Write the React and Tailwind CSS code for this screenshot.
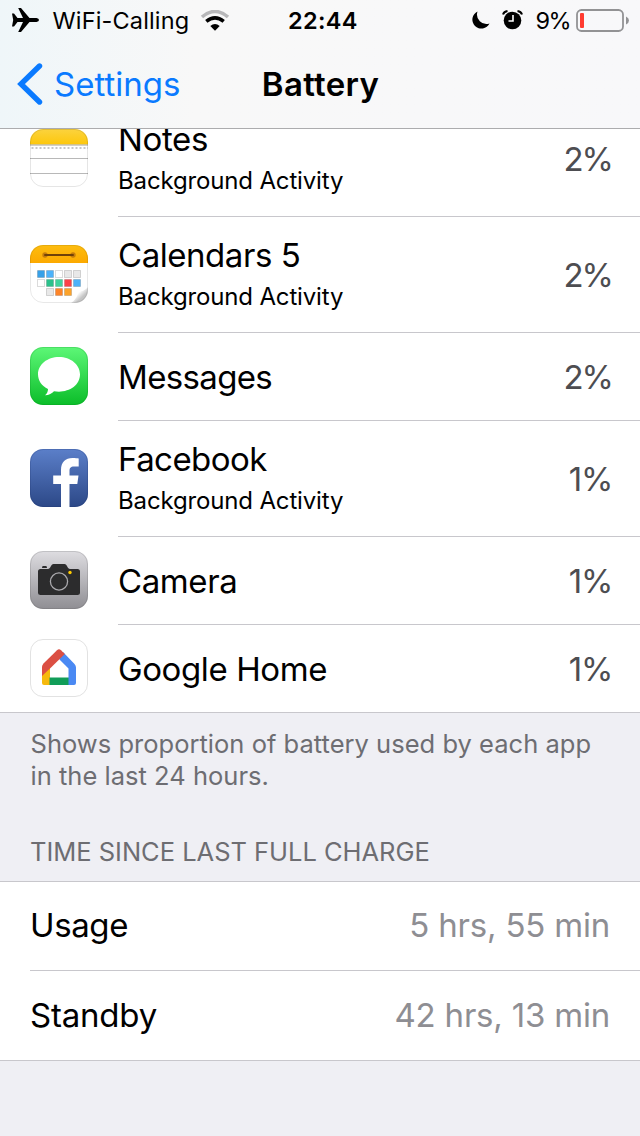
import React from "react";

function NotesIcon() {
  return (
    <svg className="size-[58px]" viewBox="0 0 58 58">
      <defs>
        <clipPath id="notesClip"><rect width="58" height="58" rx="13" /></clipPath>
        <linearGradient id="notesTop" x1="0" y1="0" x2="0" y2="1">
          <stop offset="0" stopColor="#fbd33f" />
          <stop offset="1" stopColor="#fdc70b" />
        </linearGradient>
      </defs>
      <g clipPath="url(#notesClip)">
        <rect width="58" height="58" fill="#fff" />
        <rect width="58" height="15.5" fill="url(#notesTop)" />
        <path d="M0 16H58" stroke="#a6a28f" strokeWidth="1.1" />
        <path d="M1.500 19H58" stroke="#c6c6c6" strokeWidth="2" strokeDasharray="2 2" />
        <path d="M0 29.500H58M0 44.500H58" stroke="#b8b8b8" strokeWidth="1" />
      </g>
      <rect x=".5" y=".5" width="57" height="57" rx="12.500" fill="none" stroke="#000" strokeOpacity=".1" />
    </svg>
  );
}

const calendarCells = [
  [7, 25, "#36a0e8"], [16, 25, "#4cb2fa"], [25, 25, "#ffffff"], [34, 25, "#e8e8e8"], [43, 25, "#e8e8e8"],
  [7, 34, "#ffffff"], [16, 34, "#2bc18b"], [25, 34, "#40d39c"], [34, 34, "#fb4248"], [43, 34, "#4cb2fa"],
  [16, 43, "#e8e8e8"], [25, 43, "#fd8428"], [34, 43, "#fca32a"],
];

function CalendarsIcon() {
  return (
    <svg className="size-[58px]" viewBox="0 0 58 58">
      <defs>
        <clipPath id="calClip"><rect width="58" height="58" rx="13" /></clipPath>
        <linearGradient id="calTop" x1="0" y1="0" x2="0" y2="1">
          <stop offset="0" stopColor="#fdbd10" />
          <stop offset="1" stopColor="#fca900" />
        </linearGradient>
        <linearGradient id="calCurl" x1="0" y1="0" x2="1" y2="1">
          <stop offset="0.1" stopColor="#d0d0d0" />
          <stop offset="0.4" stopColor="#ffffff" />
          <stop offset="0.65" stopColor="#c4c4c4" />
        </linearGradient>
      </defs>
      <g clipPath="url(#calClip)">
        <rect width="58" height="58" fill="#fff" />
        <rect width="58" height="18" fill="url(#calTop)" />
        <circle cx="15" cy="10" r="2.700" fill="#c57c0c" />
        <circle cx="43" cy="10" r="2.700" fill="#c57c0c" />
        <path d="M15 10H43" stroke="#704209" strokeWidth="2" strokeLinecap="round" />
        {calendarCells.map(([x, y, fill]) => (
          <rect key={`${x}-${y}`} x={x + 0.5} y={y + 0.5} width="7" height="7" fill={fill} stroke="#000" strokeOpacity=".14" strokeWidth="1" />
        ))}
        <path d="M58 42C55 46 51 46 49 47C47 49 48 53 41 58H58Z" fill="url(#calCurl)" />
      </g>
      <rect x=".5" y=".5" width="57" height="57" rx="12.500" fill="none" stroke="#000" strokeOpacity=".09" />
    </svg>
  );
}

function MessagesIcon() {
  return (
    <svg className="size-[58px]" viewBox="0 0 58 58">
      <defs>
        <linearGradient id="msgBg" x1="0" y1="0" x2="0" y2="1">
          <stop offset="0" stopColor="#5df777" />
          <stop offset="1" stopColor="#0bbd29" />
        </linearGradient>
      </defs>
      <rect width="58" height="58" rx="13" fill="url(#msgBg)" />
      <rect x=".5" y=".5" width="57" height="57" rx="12.500" fill="none" stroke="#087b1d" strokeOpacity=".2" />
      <path d="M29 10C17.300 10 8 17.500 8 27.300C8 33.700 11.800 39 18 42C18 44.500 17 46.500 15 48.300C19 48 22 46.500 24 44.200C37 46.500 50 39.500 50 27.300C50 17.500 40.500 10 29 10Z" fill="#fff" />
    </svg>
  );
}

function FacebookIcon() {
  return (
    <svg className="size-[58px]" viewBox="0 0 58 58">
      <defs>
        <linearGradient id="fbBg" x1="0" y1="0" x2="0" y2="1">
          <stop offset="0" stopColor="#5b7fc9" />
          <stop offset="1" stopColor="#2c4887" />
        </linearGradient>
      </defs>
      <rect width="58" height="58" rx="13" fill="url(#fbBg)" />
      <rect x=".5" y=".5" width="57" height="57" rx="12.500" fill="none" stroke="#172c63" strokeOpacity=".2" />
      <path d="M31 58V35H23.200V26.500H31V21C31 13 35.500 9 42.500 9C45.200 9 47.400 9.200 48.700 9.500V17.500H44C40.500 17.500 39.500 19 39.500 22V26.500H48.500L47.300 35H39.500V58Z" fill="#fff" />
    </svg>
  );
}

function CameraIcon() {
  return (
    <svg className="size-[58px]" viewBox="0 0 58 58">
      <defs>
        <linearGradient id="camBg" x1="0" y1="0" x2="0" y2="1">
          <stop offset="0" stopColor="#dedde1" />
          <stop offset="1" stopColor="#8f8e93" />
        </linearGradient>
      </defs>
      <rect width="58" height="58" rx="13" fill="url(#camBg)" />
      <rect x=".5" y=".5" width="57" height="57" rx="12.500" fill="none" stroke="#555" strokeOpacity=".2" />
      <path d="M13 15H16Q17 15 17 17H12Q12 15 13 15Z" fill="#2c2c2d" />
      <path d="M10.500 18H18C20.500 18 21 13 23.500 13H34.500C37 13 37.500 18 40 18H47.500Q50 18 50 20.500V42Q50 44 47.500 44H10.500Q8 44 8 42V20.500Q8 18 10.500 18Z" fill="#2c2c2d" />
      <circle cx="29" cy="30.500" r="8.600" fill="none" stroke="#aaa9ad" strokeWidth="1.300" />
      <circle cx="40" cy="21.500" r="1.700" fill="#ffcc00" />
    </svg>
  );
}

function GoogleHomeIcon() {
  return (
    <svg className="size-[58px]" viewBox="0 0 58 58">
      <rect x=".5" y=".5" width="57" height="57" rx="12.500" fill="#fff" stroke="#e2e2e2" />
      <path d="M12 34L20 28V46H14Q12 46 12 44Z" fill="#f6b90d" />
      <path d="M19.500 38.500H39V46H19.500Z" fill="#119d58" />
      <path d="M29 16L33 13L44.500 25Q46 26.500 46 28.500V44Q46 46 44 46H38.500V29.500L29.500 20.500Z" fill="#4a89f3" />
      <path d="M12 37V28Q12 26 13.500 24.500L27 11.200Q29 9.500 31 11.200L34.800 15L20 29.500Z" fill="#db4f43" />
    </svg>
  );
}

const apps = [
  { name: "Notes", background: true, percent: "2%", Icon: NotesIcon, tracking: "tracking-[-0.35px]" },
  { name: "Calendars 5", background: true, percent: "2%", Icon: CalendarsIcon, tracking: "tracking-[-0.45px]" },
  { name: "Messages", background: false, percent: "2%", Icon: MessagesIcon, tracking: "tracking-[-0.65px]" },
  { name: "Facebook", background: true, percent: "1%", Icon: FacebookIcon, tracking: "tracking-[-0.55px]" },
  { name: "Camera", background: false, percent: "1%", Icon: CameraIcon, tracking: "tracking-[-0.4px]" },
  { name: "Google Home", background: false, percent: "1%", Icon: GoogleHomeIcon, tracking: "tracking-[-0.4px]" },
];

function AppRow({ app, last }) {
  const { Icon } = app;
  const height = app.background ? "h-[116px]" : last ? "h-[87px]" : "h-[88px]";
  const percentTracking = app.percent === "1%" ? "mr-[-0.5px] tracking-[-1px]" : "tracking-[-2px]";
  return (
    <li className={`flex pl-[30px] ${height}`}>
      <div className={app.background ? "pt-[28px]" : "pt-[14px]"}>
        <Icon />
      </div>
      <div className={`ml-[30px] flex flex-1 items-center justify-between pr-[28px] ${last ? "" : "border-b border-[#c8c7cc]"}`}>
        <div className={`flex flex-col gap-[6px] ${app.background ? "pb-[2px]" : ""}`}>
          <span className={`text-[33px] leading-[40px] text-black ${app.tracking}`}>{app.name}</span>
          {app.background && <span className="text-[24px] leading-[32px] tracking-[-0.15px] text-black">Background Activity</span>}
        </div>
        <span className={`text-[33px] leading-[40px] text-[#4d4d51] ${percentTracking}`}>{app.percent}</span>
      </div>
    </li>
  );
}

function StatusBar() {
  return (
    <div className="flex h-[40px] items-center text-black">
      <svg className="ml-[11px] h-[26px] w-[29px]" viewBox="0 0 29 26">
        <path d="M1 6.500H3L6.500 11H12L7.200 1H10L18.500 11H25.500Q28 11.500 28 13Q28 14.500 25.500 15H18.500L10 25H7.200L12 15H6.500L3 19.500H1L2.200 13Z" fill="#000" />
      </svg>
      <span className="ml-[12.500px] w-[137.500px] pt-px text-[23.500px] leading-[40px] tracking-[0.15px] whitespace-nowrap">WiFi-Calling</span>
      <svg className="ml-[10px] h-[21px] w-[30px]" viewBox="0 0 30 21">
        <path d="M2 7Q15 -4 28 7" fill="none" stroke="#b7b7b9" strokeWidth="3.600" />
        <path d="M6.300 11.300Q15 4.300 23.700 11.300" fill="none" stroke="#000" strokeWidth="3.600" />
        <path d="M10.300 16Q15 12 19.700 16L15 20.800Z" fill="#000" />
      </svg>
      <span className="ml-[58px] w-[70px] pt-px text-[23.500px] leading-[40px] font-semibold tracking-[0.3px] whitespace-nowrap">22:44</span>
      <svg className="ml-[113px] h-[18px] w-[19px]" viewBox="0 0 19 18">
        <path d="M6.500 0.500A9 9 0 1 0 18.500 12.500A9.500 9.500 0 0 1 6.500 .5Z" fill="#000" />
      </svg>
      <svg className="ml-[12px] h-[20px] w-[21px]" viewBox="0 0 21 20">
        <circle cx="10.500" cy="10.500" r="8.800" fill="#000" />
        <path d="M1 4.500Q2 1.500 5.500 1M15.500 1Q19 1.500 20 4.500" fill="none" stroke="#000" strokeWidth="2" />
        <path d="M11 5V11H6.500" fill="none" stroke="#fff" strokeWidth="1.600" />
      </svg>
      <span className="ml-[12.500px] w-[35.500px] pt-px text-[23.500px] leading-[40px] tracking-[-1.500px] whitespace-nowrap">9%</span>
      <svg className="ml-[5px] h-[24px] w-[54px]" viewBox="0 0 54 24">
        <rect x="1" y="2" width="46" height="21" rx="4.500" fill="none" stroke="#929294" strokeWidth="1.800" />
        <rect x="4" y="5" width="4" height="15" rx="1" fill="#ff3b30" />
        <path d="M50 8.500Q53 10 53 12.500T50 16.500Z" fill="#929294" />
      </svg>
    </div>
  );
}

export default function App() {
  return (
    <div className="flex h-[1136px] w-[640px] flex-col overflow-hidden bg-[#efeff4] font-['Inter','Liberation_Sans',sans-serif]">
      <header className="relative z-10 h-[129px] shrink-0 border-b border-[#acacae] bg-[#f8f8f9] bg-linear-to-r from-[#eff6f9] via-[#f8f8f8] via-30% to-[#f8f8fa]">
        <StatusBar />
        <nav className="grid h-[88px] grid-cols-[1fr_auto_1fr] items-center">
          <a className="flex items-center pl-[17px] text-[#0a7aff]">
            <svg className="h-[42px] w-[26px]" viewBox="0 0 26 42">
              <path d="M22.500 3L4 21L22.500 39" fill="none" stroke="currentColor" strokeWidth="5.400" strokeLinecap="round" />
            </svg>
            <span className="ml-[11px] text-[33px] leading-[40px] tracking-[0.02px]">Settings</span>
          </a>
          <h1 className="pl-px text-[33px] leading-[40px] font-semibold tracking-[0.3px] text-black">Battery</h1>
          <span />
        </nav>
      </header>

      <main className="-mt-[28px] flex flex-col">
        <ul className="border-b border-[#c8c7cc] bg-white">
          {apps.map((app, i) => (
            <AppRow key={app.name} app={app} last={i === apps.length - 1} />
          ))}
        </ul>

        <p className="px-[30.500px] pt-[15px] text-[25.500px] leading-[32px] tracking-[0.02px] text-[#6d6d72]">
          Shows proportion of battery used by each app<br />in the last 24 hours.
        </p>
        <h2 className="mt-[44px] px-[30px] text-[25.500px] leading-[32px] tracking-[-0.02px] text-[#6d6d72]">TIME SINCE LAST FULL CHARGE</h2>

        <dl className="mt-[13px] border-y border-[#c8c7cc] bg-white pl-[30px]">
          <div className="flex h-[89px] items-center justify-between border-b border-[#c8c7cc] pr-[30px] pb-[2px] text-[33px] leading-[40px]">
            <dt className="tracking-[-0.4px] text-black">Usage</dt>
            <dd className="tracking-[-0.2px] text-[#8e8e93]">5 hrs, 55 min</dd>
          </div>
          <div className="flex h-[89px] items-center justify-between pr-[30px] pb-[2px] text-[33px] leading-[40px]">
            <dt className="tracking-[-0.2px] text-black">Standby</dt>
            <dd className="tracking-[-0.2px] text-[#8e8e93]">42 hrs, 13 min</dd>
          </div>
        </dl>
      </main>
    </div>
  );
}
